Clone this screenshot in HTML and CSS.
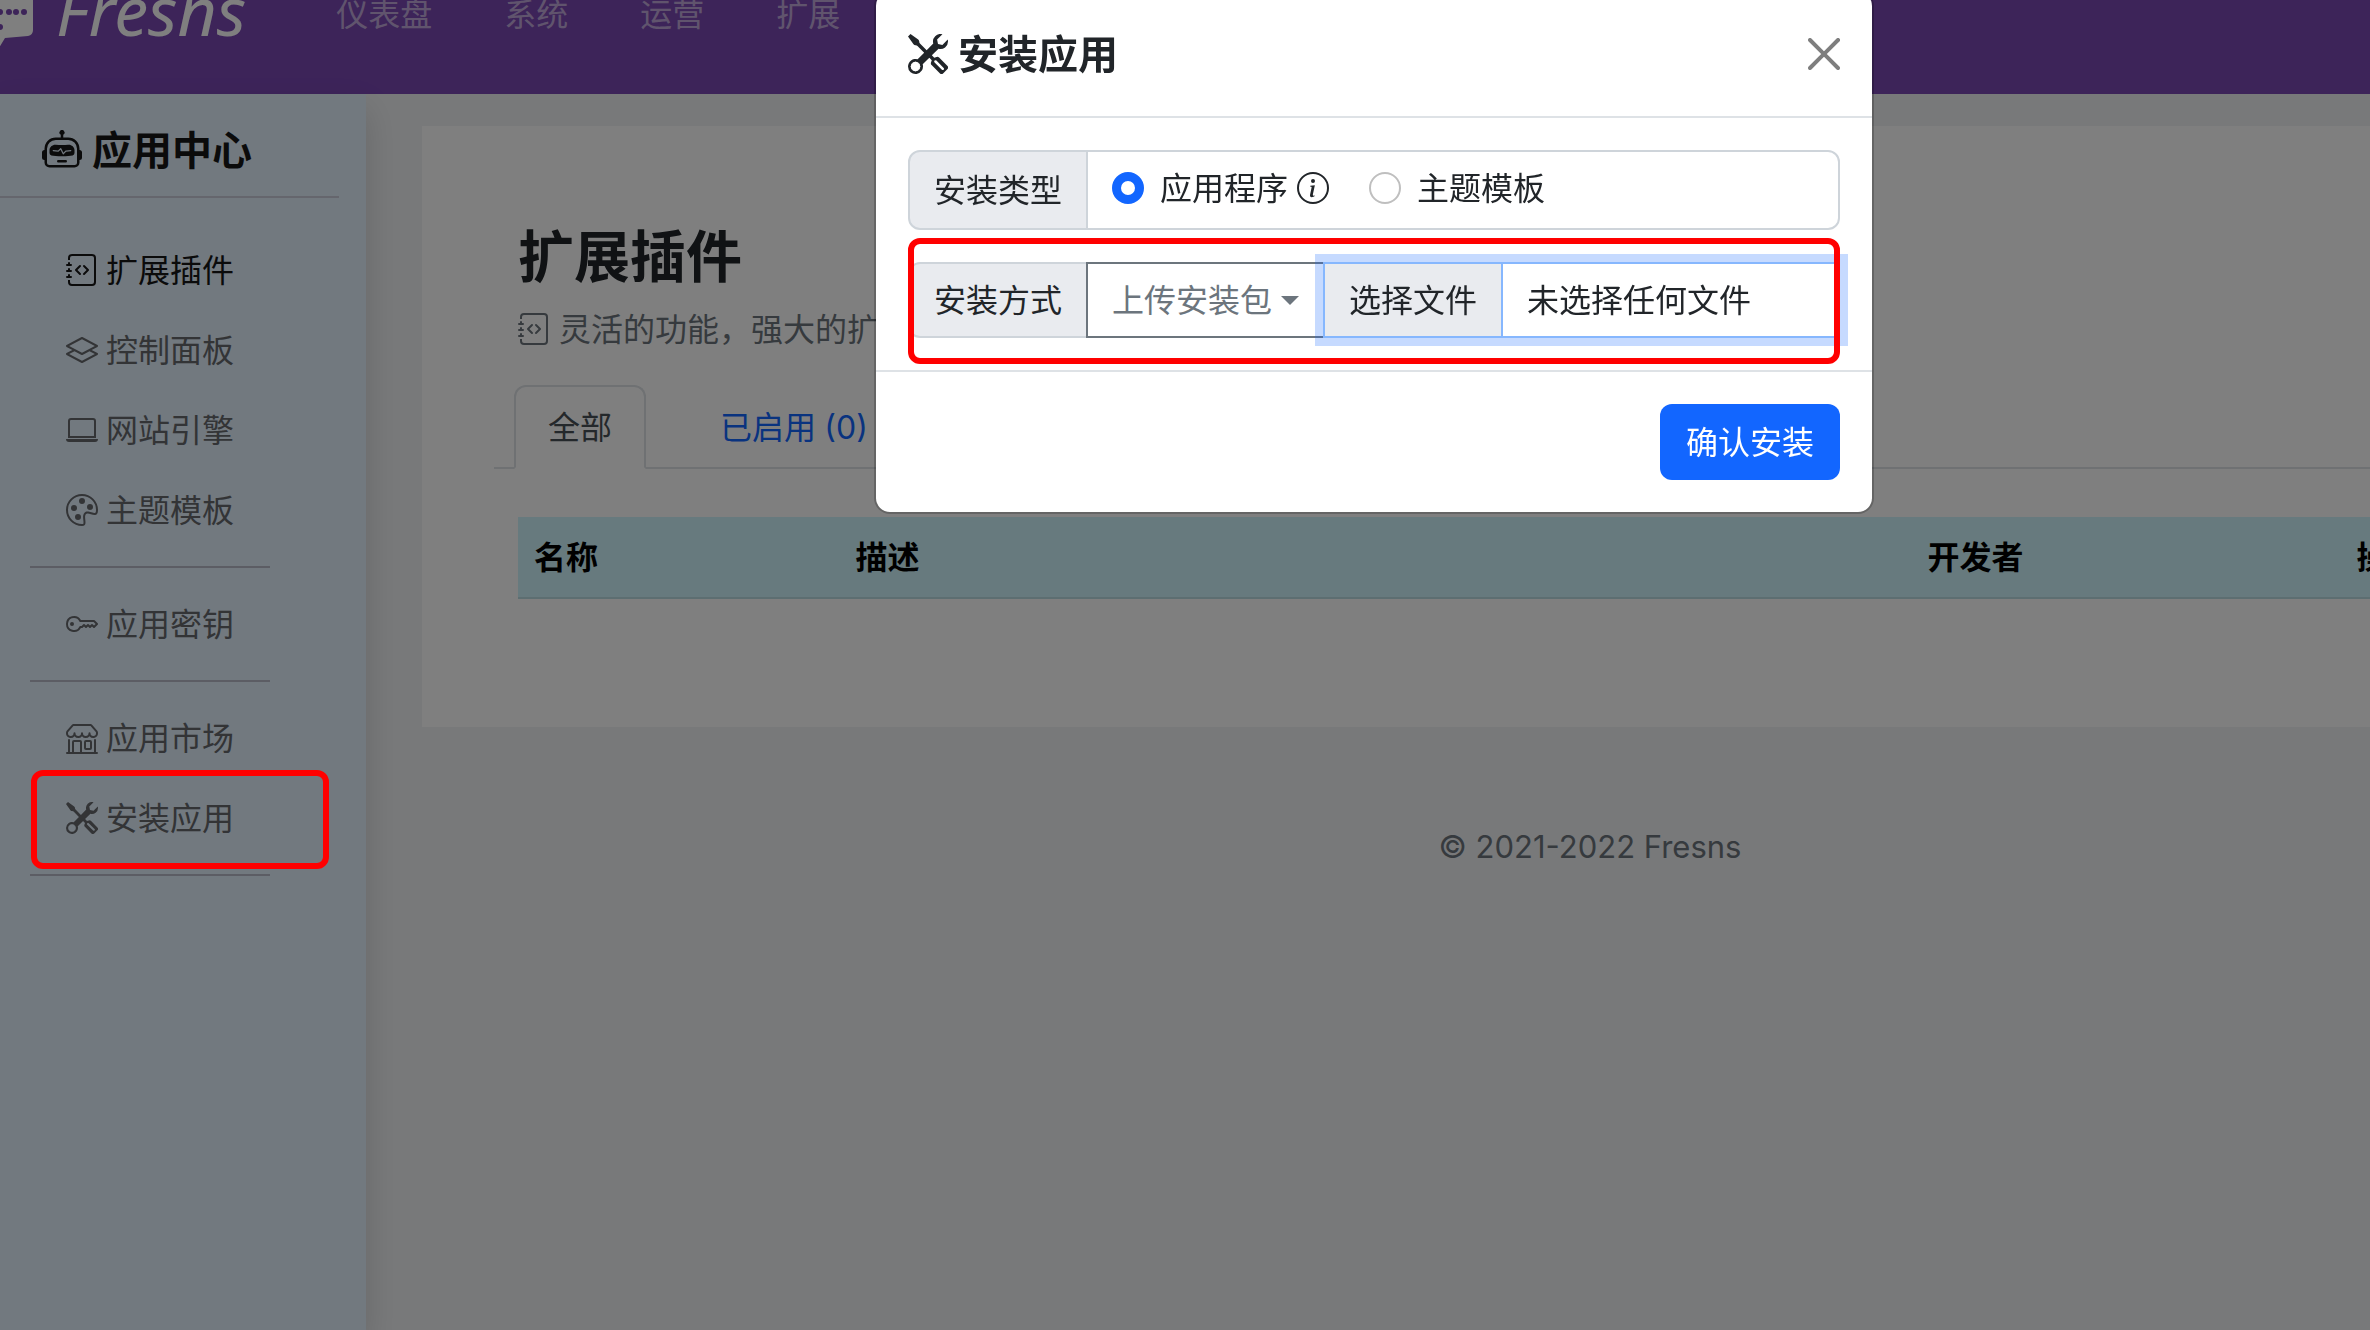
FILE: index.html
```html
<!DOCTYPE html>
<html lang="zh-CN">
<head>
<meta charset="utf-8">
<title>Fresns</title>
<link rel="stylesheet" href="styles.css">
</head>
<body>
<svg class="sprite" aria-hidden="true">
  <symbol id="tools" viewBox="0 0 16 16"><path d="M1 0 0 1l2.2 3.081a1 1 0 0 0 .815.419h.07a1 1 0 0 1 .708.293l2.675 2.675-2.617 2.654A3.003 3.003 0 0 0 0 13a3 3 0 1 0 5.878-.851l2.654-2.617.968.968-.305.914a1 1 0 0 0 .242 1.023l3.27 3.27a.997.997 0 0 0 1.414 0l1.586-1.586a.997.997 0 0 0 0-1.414l-3.27-3.27a1 1 0 0 0-1.023-.242L10.5 9.5l-.96-.96 2.68-2.643A3.005 3.005 0 0 0 16 3c0-.269-.035-.53-.102-.777l-2.14 2.141L12 4l-.364-1.757L13.777.102a3 3 0 0 0-3.675 3.68L7.462 6.46 4.793 3.793a1 1 0 0 1-.293-.707v-.071a1 1 0 0 0-.419-.814L1 0Zm9.646 10.646a.5.5 0 0 1 .708 0l2.914 2.915a.5.5 0 0 1-.707.707l-2.915-2.914a.5.5 0 0 1 0-.708ZM3 11l.471.242.529.026.287.445.445.287.026.529L5 13l-.242.471-.026.529-.445.287-.287.445-.529.026L3 15l-.471-.242L2 14.732l-.287-.445L1.268 14l-.026-.529L1 13l.242-.471.026-.529.445-.287.287-.445.529-.026L3 11Z"/></symbol>
  <symbol id="journal-code" viewBox="0 0 16 16"><path d="M8.646 5.646a.5.5 0 0 1 .708 0l2 2a.5.5 0 0 1 0 .708l-2 2a.5.5 0 0 1-.708-.708L10.293 8 8.646 6.354a.5.5 0 0 1 0-.708zm-1.292 0a.5.5 0 0 0-.708 0l-2 2a.5.5 0 0 0 0 .708l2 2a.5.5 0 0 0 .708-.708L5.707 8l1.647-1.646a.5.5 0 0 0 0-.708z"/><path d="M3 0h10a2 2 0 0 1 2 2v12a2 2 0 0 1-2 2H3a2 2 0 0 1-2-2v-1h1v1a1 1 0 0 0 1 1h10a1 1 0 0 0 1-1V2a1 1 0 0 0-1-1H3a1 1 0 0 0-1 1v1H1V2a2 2 0 0 1 2-2z"/><path d="M1 5v-.5a.5.5 0 0 1 1 0V5h.5a.5.5 0 0 1 0 1h-2a.5.5 0 0 1 0-1H1zm0 3v-.5a.5.5 0 0 1 1 0V8h.5a.5.5 0 0 1 0 1h-2a.5.5 0 0 1 0-1H1zm0 3v-.5a.5.5 0 0 1 1 0v.5h.5a.5.5 0 0 1 0 1h-2a.5.5 0 0 1 0-1H1z"/></symbol>
</svg>

<div class="page">
  <header class="navbar">
    <a class="brand" href="#">
      <svg class="brand-mark" viewBox="0 0 60 72" aria-hidden="true">
        <path fill="currentColor" d="M8 6 54 2q6 0 6 6v44q0 5-5 6L32 60 26 70 18 72 10 60Q4 58 4 52V12q0-6 4-6z"/>
        <g class="brand-dots"><circle cx="27" cy="34" r="3"/><circle cx="36" cy="34" r="3"/><circle cx="43" cy="34" r="3"/><circle cx="51" cy="34" r="3"/><circle cx="27" cy="49" r="3"/></g>
      </svg>
      <span class="brand-name">Fresns</span>
    </a>
    <nav class="menu">
      <a href="#">仪表盘</a>
      <a href="#">系统</a>
      <a href="#">运营</a>
      <a href="#">扩展</a>
    </nav>
  </header>

  <div class="layout">
    <aside class="sidebar">
      <h3 class="sidebar-title">
        <svg class="icon-lg" viewBox="0 0 16 16"><path d="M6 12.5a.5.5 0 0 1 .5-.5h3a.5.5 0 0 1 0 1h-3a.5.5 0 0 1-.5-.5ZM3 8.062C3 6.76 4.235 5.765 5.53 5.886a26.58 26.58 0 0 0 4.94 0C11.765 5.765 13 6.76 13 8.062v1.157a.933.933 0 0 1-.765.935c-.845.147-2.34.346-4.235.346-1.895 0-3.39-.2-4.235-.346A.933.933 0 0 1 3 9.219V8.062Zm4.542-.827a.25.25 0 0 0-.217.068l-.92.9a24.767 24.767 0 0 1-1.871-.183.25.25 0 0 0-.068.495c.55.076 1.232.149 2.02.193a.25.25 0 0 0 .189-.071l.754-.736.847 1.71a.25.25 0 0 0 .404.062l.932-.97a25.286 25.286 0 0 0 1.922-.188.25.25 0 0 0-.068-.495c-.538.074-1.207.145-1.98.189a.25.25 0 0 0-.166.076l-.754.785-.842-1.7a.25.25 0 0 0-.182-.135Z"/><path d="M8.5 1.866a1 1 0 1 0-1 0V3h-2A4.5 4.5 0 0 0 1 7.5V8a1 1 0 0 0-1 1v2a1 1 0 0 0 1 1v1a2 2 0 0 0 2 2h10a2 2 0 0 0 2-2v-1a1 1 0 0 0 1-1V9a1 1 0 0 0-1-1v-.5A4.5 4.5 0 0 0 10.5 3h-2V1.866ZM14 7.5V13a1 1 0 0 1-1 1H3a1 1 0 0 1-1-1V7.5A3.5 3.5 0 0 1 5.5 4h5A3.5 3.5 0 0 1 14 7.5Z"/></svg>
        应用中心
      </h3>
      <ul class="side-nav">
        <li><a class="active" href="#"><svg class="icon"><use href="#journal-code"/></svg>扩展插件</a></li>
        <li><a href="#"><svg class="icon" viewBox="0 0 16 16"><path d="M8.235 1.559a.5.5 0 0 0-.47 0l-7.5 4a.5.5 0 0 0 0 .882L3.188 8 .264 9.559a.5.5 0 0 0 0 .882l7.5 4a.5.5 0 0 0 .47 0l7.5-4a.5.5 0 0 0 0-.882L12.813 8l2.922-1.559a.5.5 0 0 0 0-.882l-7.5-4zm3.515 7.008L14.438 10 8 13.433 1.562 10 4.25 8.567l3.515 1.874a.5.5 0 0 0 .47 0l3.515-1.874zM8 9.433 1.562 6 8 2.567 14.438 6 8 9.433z"/></svg>控制面板</a></li>
        <li><a href="#"><svg class="icon" viewBox="0 0 16 16"><path d="M13.5 3a.5.5 0 0 1 .5.5V11H2V3.5a.5.5 0 0 1 .5-.5h11zm-11-1A1.5 1.5 0 0 0 1 3.5V12h14V3.5A1.5 1.5 0 0 0 13.5 2h-11zM0 12.5h16a1.5 1.5 0 0 1-1.5 1.5h-13A1.5 1.5 0 0 1 0 12.5z"/></svg>网站引擎</a></li>
        <li><a href="#"><svg class="icon" viewBox="0 0 16 16"><path d="M8 5a1.5 1.5 0 1 0 0-3 1.5 1.5 0 0 0 0 3zm4 3a1.5 1.5 0 1 0 0-3 1.5 1.5 0 0 0 0 3zM5.5 7a1.5 1.5 0 1 1-3 0 1.5 1.5 0 0 1 3 0zm.5 6a1.5 1.5 0 1 0 0-3 1.5 1.5 0 0 0 0 3z"/><path d="M16 8c0 3.15-1.866 2.585-3.567 2.07C11.42 9.763 10.465 9.473 10 10c-.603.683-.475 1.819-.351 2.92C9.826 14.495 9.996 16 8 16a8 8 0 1 1 8-8zm-8 7c.611 0 .654-.171.655-.176.078-.146.124-.464.07-1.119-.014-.168-.037-.37-.061-.591-.052-.464-.112-1.005-.118-1.462-.01-.707.083-1.61.704-2.314.369-.417.845-.578 1.272-.618.404-.038.812.026 1.16.104.343.077.702.186 1.025.284l.028.008c.346.105.658.199.953.266.653.148.904.083.991.024C14.717 9.38 15 9.161 15 8a7 7 0 1 0-7 7z"/></svg>主题模板</a></li>
        <li class="divider"></li>
        <li><a href="#"><svg class="icon" viewBox="0 0 16 16"><path d="M0 8a4 4 0 0 1 7.465-2H14a.5.5 0 0 1 .354.146l1.5 1.5a.5.5 0 0 1 0 .708l-1.5 1.5a.5.5 0 0 1-.708 0L13 9.207l-.646.647a.5.5 0 0 1-.708 0L11 9.207l-.646.647a.5.5 0 0 1-.708 0L9 9.207l-.646.647A.5.5 0 0 1 8 10h-.535A4 4 0 0 1 0 8zm4-3a3 3 0 1 0 2.712 4.285A.5.5 0 0 1 7.163 9h.63l.853-.854a.5.5 0 0 1 .708 0l.646.647.646-.647a.5.5 0 0 1 .708 0l.646.647.646-.647a.5.5 0 0 1 .708 0l.646.647.793-.793-1-1h-6.63a.5.5 0 0 1-.451-.285A3 3 0 0 0 4 5z"/><path d="M4 8a1 1 0 1 1-2 0 1 1 0 0 1 2 0z"/></svg>应用密钥</a></li>
        <li class="divider"></li>
        <li><a href="#"><svg class="icon" viewBox="0 0 16 16"><path d="M2.97 1.35A1 1 0 0 1 3.73 1h8.54a1 1 0 0 1 .76.35l2.609 3.044A1.5 1.5 0 0 1 16 5.37v.255a2.375 2.375 0 0 1-4.25 1.458A2.371 2.371 0 0 1 9.875 8 2.37 2.37 0 0 1 8 7.083 2.37 2.37 0 0 1 6.125 8a2.37 2.37 0 0 1-1.875-.917A2.375 2.375 0 0 1 0 5.625V5.37a1.5 1.5 0 0 1 .361-.976l2.61-3.045zm1.78 4.275a1.375 1.375 0 0 0 2.75 0 .5.5 0 0 1 1 0 1.375 1.375 0 0 0 2.75 0 .5.5 0 0 1 1 0 1.375 1.375 0 1 0 2.75 0V5.37a.5.5 0 0 0-.12-.325L12.27 2H3.73L1.12 5.045A.5.5 0 0 0 1 5.37v.255a1.375 1.375 0 0 0 2.75 0 .5.5 0 0 1 1 0zM1.5 8.5A.5.5 0 0 1 2 9v6h1v-5a1 1 0 0 1 1-1h3a1 1 0 0 1 1 1v5h6V9a.5.5 0 0 1 1 0v6h.5a.5.5 0 0 1 0 1H.5a.5.5 0 0 1 0-1H1V9a.5.5 0 0 1 .5-.5zM4 15h3v-5H4v5zm5-5a1 1 0 0 1 1-1h2a1 1 0 0 1 1 1v3a1 1 0 0 1-1 1h-2a1 1 0 0 1-1-1v-3zm3 0h-2v3h2v-3z"/></svg>应用市场</a></li>
        <li class="marked"><a href="#"><svg class="icon"><use href="#tools"/></svg>安装应用</a></li>
        <li class="divider"></li>
      </ul>
    </aside>

    <main class="content">
      <section class="card">
        <h1>扩展插件</h1>
        <p class="lead"><svg class="icon"><use href="#journal-code"/></svg>灵活的功能，强大的扩展</p>
        <nav class="tabs">
          <a class="tab current" href="#">全部</a>
          <a class="tab" href="#">已启用 <span class="count">(0)</span></a>
        </nav>
        <table class="apps">
          <thead>
            <tr><th class="w15">名称</th><th class="w50">描述</th><th class="w20">开发者</th><th class="w15">操作</th></tr>
          </thead>
        </table>
      </section>
      <footer class="copyright">© 2021-2022 Fresns</footer>
    </main>
  </div>
</div>

<div class="modal-layer">
  <form class="modal" role="dialog" aria-labelledby="modal-title">
    <div class="modal-header">
      <h5 id="modal-title"><svg class="icon-lg"><use href="#tools"/></svg>安装应用</h5>
      <button class="close" type="button" aria-label="关闭"><svg class="icon" viewBox="0 0 16 16"><path d="M.293.293a1 1 0 0 1 1.414 0L8 6.586 14.293.293a1 1 0 1 1 1.414 1.414L9.414 8l6.293 6.293a1 1 0 0 1-1.414 1.414L8 9.414l-6.293 6.293a1 1 0 0 1-1.414-1.414L6.586 8 .293 1.707a1 1 0 0 1 0-1.414z"/></svg></button>
    </div>
    <div class="modal-body">
      <div class="group" role="radiogroup" aria-labelledby="type-label">
        <span class="group-label" id="type-label">安装类型</span>
        <div class="choices">
          <input type="radio" name="type" id="type-app" checked>
          <label for="type-app">应用程序<svg class="icon" viewBox="0 0 16 16"><path d="M8 15A7 7 0 1 1 8 1a7 7 0 0 1 0 14zm0 1A8 8 0 1 0 8 0a8 8 0 0 0 0 16z"/><path d="m8.93 6.588-2.29.287-.082.38.45.083c.294.07.352.176.288.469l-.738 3.468c-.194.897.105 1.319.808 1.319.545 0 1.178-.252 1.465-.598l.088-.416c-.2.176-.492.246-.686.246-.275 0-.375-.193-.304-.533L8.93 6.588zM9 4.5a1 1 0 1 1-2 0 1 1 0 0 1 2 0z"/></svg></label>
          <input type="radio" name="type" id="type-theme">
          <label for="type-theme">主题模板</label>
        </div>
      </div>
      <div class="group marked-group">
        <label class="group-label" for="package">安装方式</label>
        <button class="dropdown" type="button">上传安装包<span class="caret"></span></button>
        <div class="file">
          <span class="file-button">选择文件</span>
          <span class="file-name">未选择任何文件</span>
          <input type="file" id="package">
        </div>
      </div>
    </div>
    <div class="modal-footer">
      <button class="submit" type="submit">确认安装</button>
    </div>
  </form>
</div>
</body>
</html>
```
FILE: styles.css
```css
* {
  box-sizing: border-box;
}

html,
body {
  margin: 0;
  height: 100%;
  overflow: hidden;
}

body {
  background: #f1f3f5;
  color: #212529;
  font: 32px/48px "Noto Sans", "Noto Sans CJK SC", sans-serif;
}

h1,
h3,
h5,
p,
ul {
  margin: 0;
  padding: 0;
}

ul {
  list-style: none;
}

a {
  color: inherit;
  text-decoration: none;
}

button {
  font: inherit;
}

.sprite {
  display: none;
}

.icon,
.icon-lg {
  flex: none;
  width: 32px;
  height: 32px;
  fill: currentColor;
}

.icon-lg {
  width: 40px;
  height: 40px;
}

/* The page is wider than the window and scrolled a little way down. */
.page {
  display: flex;
  flex-direction: column;
  width: calc(100% + 444px);
  min-height: calc(100vh + 66px);
  margin-top: -66px;
}

/* Backdrop behind the dialog */
.page::after {
  content: "";
  position: fixed;
  inset: 0;
  z-index: 1;
  background: rgba(0, 0, 0, .5);
}

.navbar {
  display: flex;
  align-items: center;
  gap: 90px;
  height: 160px;
  background: #7a48b3;
}

.brand {
  display: flex;
  align-items: flex-start;
  gap: 23px;
  margin-left: -27px;
  color: #fff;
}

.brand-mark {
  width: 60px;
  height: 72px;
}

.brand-dots {
  fill: #7a48b3;
}

.brand-name {
  font: italic 400 68px/64px "Noto Sans", sans-serif;
}

.menu {
  display: flex;
  gap: 72px;
  color: rgba(255, 255, 255, .55);
}

.layout {
  display: flex;
  flex: 1;
}

.sidebar {
  flex: none;
  width: 366px;
  padding-top: 32px;
  background: #e5f2ff;
  box-shadow: 0 16px 32px rgba(0, 0, 0, .15);
}

.sidebar-title {
  display: flex;
  align-items: center;
  gap: 10px;
  margin-right: 27px;
  padding: 0 0 22px 42px;
  border-bottom: 2px solid #cbcdda;
  color: #161616;
  font-size: 40px;
}

.side-nav {
  width: 240px;
  margin: 32px 0 0 30px;
}

.side-nav a {
  display: flex;
  align-items: center;
  gap: 8px;
  padding: 16px 0 16px 36px;
  color: #66696d;
}

.side-nav .active {
  color: #161616;
}

.divider {
  height: 2px;
  margin: 16px 0;
  background: #b9bbc8;
}

.marked {
  position: relative;
}

.marked::after {
  content: "";
  position: absolute;
  inset: -8px -59px -11px 1px;
  z-index: 2;
  border: 6px solid #f00;
  border-radius: 12px;
  pointer-events: none;
}

.content {
  flex: 1;
  padding: 32px 56px 0;
}

.card {
  position: relative;
  padding: 96px 96px 128px;
  background: #fff;
}

h1 {
  font-size: 56px;
  line-height: 67px;
}

.lead {
  display: flex;
  align-items: center;
  gap: 9px;
  margin: 16px 0 32px;
  color: #6c757d;
}

.tabs {
  display: flex;
  gap: 40px;
  margin: 0 -24px 48px;
  padding-left: 20px;
  box-shadow: inset 0 -2px #dee2e6;
}

.tab {
  padding: 16px 32px;
  border: 2px solid transparent;
  color: #1266ff;
}

.tab.current {
  border-color: #dee2e6 #dee2e6 #fff;
  border-radius: 12px 12px 0 0;
  background: #fff;
  color: #495057;
}

.count {
  font-family: Inter, sans-serif;
  line-height: 1;
}

.apps {
  width: 100%;
  border-collapse: separate;
  border-spacing: 0;
  table-layout: fixed;
  background: #cff4fc;
  color: #000;
}

.apps th {
  padding: 16px;
  border-bottom: 2px solid #badce3;
  text-align: left;
}

.w15 {
  width: 15%;
}

.w20 {
  width: 20%;
}

.w50 {
  width: 50%;
}

.copyright {
  margin-top: 96px;
  color: #6c757d;
  font-family: Inter, sans-serif;
  font-size: 31px;
  text-align: center;
}

.modal-layer {
  position: fixed;
  inset: -10px -378px 0 0;
  z-index: 3;
  display: flex;
  align-items: flex-start;
  justify-content: center;
}

.modal {
  width: 1000px;
  border: 2px solid rgba(0, 0, 0, .2);
  border-radius: 16px;
  background: #fff;
  background-clip: padding-box;
}

.modal-header {
  display: flex;
  align-items: center;
  justify-content: space-between;
  padding: 32px;
  border-bottom: 2px solid #dee2e6;
}

.modal-header h5 {
  display: flex;
  align-items: center;
  gap: 10px;
  font-size: 40px;
  line-height: 60px;
}

.close {
  display: flex;
  padding: 0;
  border: 0;
  background: none;
  color: #000;
  opacity: .5;
}

.modal-body {
  display: flex;
  flex-direction: column;
  gap: 32px;
  padding: 32px;
}

.group {
  position: relative;
  display: flex;
}

.group-label {
  display: flex;
  align-items: center;
  padding: 12px 24px;
  border: 2px solid #ced4da;
  border-radius: 12px 0 0 12px;
  background: #e9ebef;
}

.choices {
  display: flex;
  flex: 1;
  align-items: center;
  margin-left: -2px;
  padding: 12px 24px 16px;
  border: 2px solid #ced4da;
  border-radius: 0 12px 12px 0;
}

.choices label {
  display: flex;
  align-items: center;
  gap: 9px;
  margin: 0 40px 0 16px;
}

.choices input {
  width: 32px;
  height: 32px;
  margin: 0;
  border: 2px solid #bfbfbf;
  border-radius: 50%;
  appearance: none;
}

.choices input:checked {
  border: 9px solid #1266ff;
}

.dropdown {
  display: flex;
  align-items: center;
  gap: 9px;
  margin-left: -2px;
  padding: 12px 24px;
  border: 2px solid #6c757d;
  background: #fff;
  color: #6c757d;
}

.caret {
  border: 9px solid transparent;
  border-top-color: currentColor;
  border-bottom: 0;
}

.file {
  position: relative;
  display: flex;
  flex: 1;
  margin-left: -2px;
  border: 2px solid #86b7fe;
  background: #fff;
  box-shadow: 0 0 0 8px rgba(18, 102, 255, .24);
}

.file-button {
  padding: 12px 24px;
  border-right: 2px solid #86b7fe;
  background: #e9ebef;
}

.file-name {
  padding: 12px 24px;
}

.file input {
  position: absolute;
  inset: 0;
  width: 100%;
  opacity: 0;
}

.marked-group::after {
  content: "";
  position: absolute;
  inset: -24px 0 -26px;
  border: 6px solid #f00;
  border-radius: 12px;
  pointer-events: none;
}

.modal-footer {
  display: flex;
  justify-content: flex-end;
  padding: 32px;
  border-top: 2px solid #dee2e6;
}

.submit {
  padding: 14px 26px;
  border: 0;
  border-radius: 12px;
  background: #1266ff;
  color: #fff;
}
```
